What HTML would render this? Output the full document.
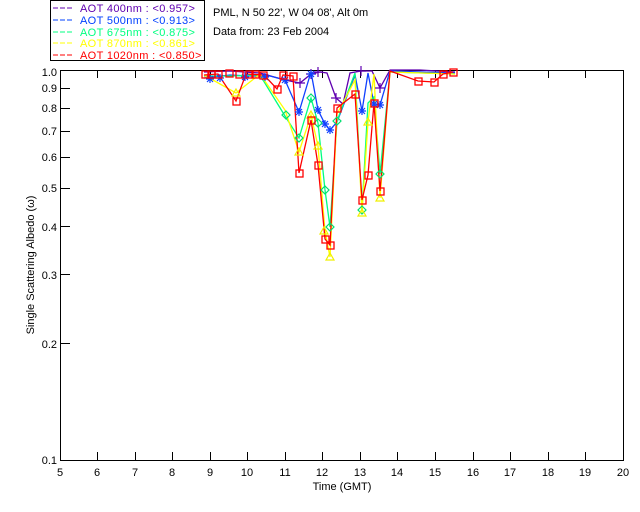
<!DOCTYPE html><html><head><style>body{margin:0;background:#fff}svg{display:block}text{font-family:"Liberation Sans",sans-serif;font-size:11px}</style></head><body>
<svg width="640" height="512" xmlns="http://www.w3.org/2000/svg">
<defs>
<path id="ast" d="M-4 0h8M0-4v8M-3-3l6 6M-3 3l6-6" fill="none"/>
<path id="dia" d="M0-4l4 4-4 4-4-4z" fill="none"/>
<path id="tri" d="M0-4l4 7h-8z" fill="none"/>
<path id="plus" d="M-5 0h10M0-5v10" fill="none"/>
</defs>
<rect x="50.5" y="0.5" width="154" height="60" fill="none" stroke="#000"/>
<g font-size="11" letter-spacing="0.35">
<line x1="53" y1="8" x2="73" y2="8" stroke="#6000b0" stroke-dasharray="5,2"/><text x="80" y="12" fill="#6000b0">AOT  400nm : &lt;0.957&gt;</text>
<line x1="53" y1="20" x2="73" y2="20" stroke="#0040ff" stroke-dasharray="5,2"/><text x="80" y="24" fill="#0040ff">AOT  500nm : &lt;0.913&gt;</text>
<line x1="53" y1="32" x2="73" y2="32" stroke="#00ff80" stroke-dasharray="5,2"/><text x="80" y="36" fill="#00ff80">AOT  675nm : &lt;0.875&gt;</text>
<line x1="53" y1="43" x2="73" y2="43" stroke="#ffff00" stroke-dasharray="5,2"/><text x="80" y="47" fill="#ffff00">AOT  870nm : &lt;0.861&gt;</text>
<line x1="53" y1="55" x2="73" y2="55" stroke="#ff0000" stroke-dasharray="5,2"/><text x="80" y="59" fill="#ff0000">AOT 1020nm : &lt;0.850&gt;</text>
</g>
<text x="213" y="16">PML, N 50 22', W 04 08', Alt 0m</text>
<text x="213" y="35">Data from: 23 Feb 2004</text>
<rect x="60.5" y="70.5" width="563" height="390" fill="none" stroke="#000"/>
<g stroke="#000">
<path d="M97.5 70v8M135.5 70v8M172.5 70v8M210.5 70v8M247.5 70v8M285.5 70v8M322.5 70v8M360.5 70v8M397.5 70v8M435.5 70v8M473.5 70v8M510.5 70v8M548.5 70v8M585.5 70v8M97.5 460v-8M135.5 460v-8M172.5 460v-8M210.5 460v-8M247.5 460v-8M285.5 460v-8M322.5 460v-8M360.5 460v-8M397.5 460v-8M435.5 460v-8M473.5 460v-8M510.5 460v-8M548.5 460v-8M585.5 460v-8"/>
<path d="M60 343.5h10M60 274.5h10M60 226.5h10M60 188.5h10M60 157.5h10M60 131.5h10M60 108.5h10M60 88.5h10"/>
</g>
<g text-anchor="end">
<text x="57" y="464">0.1</text><text x="57" y="348">0.2</text><text x="57" y="279">0.3</text><text x="57" y="231">0.4</text><text x="57" y="192">0.5</text><text x="57" y="161">0.6</text><text x="57" y="135">0.7</text><text x="57" y="112">0.8</text><text x="57" y="92">0.9</text><text x="57" y="76">1.0</text>
</g>
<g text-anchor="middle">
<text x="60" y="476">5</text><text x="97" y="476">6</text><text x="135" y="476">7</text><text x="172" y="476">8</text><text x="210" y="476">9</text><text x="247" y="476">10</text><text x="285" y="476">11</text><text x="322" y="476">12</text><text x="360" y="476">13</text><text x="397" y="476">14</text><text x="435" y="476">15</text><text x="473" y="476">16</text><text x="510" y="476">17</text><text x="548" y="476">18</text><text x="585" y="476">19</text><text x="623" y="476">20</text>
<text x="342" y="490">Time (GMT)</text>
</g>
<text transform="translate(34,265) rotate(-90)" text-anchor="middle" font-size="10">Single Scattering Albedo (ω)</text>
<g fill="none" stroke-width="1.3">
<polyline stroke="#6000b0" points="204,72 230,71 260,73 285,80 300,83 311,74 320,72 327,73 336,98 343,104 350,73 361,71 372,71 380,88 390,70 420,70 455,72"/>
<polyline stroke="#1040ff" points="204,78 230,75 250,76 270,76 285,80 299,112 311,72 318,110 325,124 330,130 337,122 355,75 362,111 368,73 374,104 380,105 390,71 455,73"/>
<polyline stroke="#00ff80" points="204,76 230,76 260,75 285,116 299,138 311,98 318,123 325,190 330,227 337,121 355,73 362,210 368,103 374,97 380,174 390,72 455,74"/>
<polyline stroke="#ffff00" points="204,75 236,93 260,74 285,110 299,152 311,115 318,146 325,231 330,257 337,114 355,80 362,213 368,122 374,74 380,198 390,72 455,74"/>
<polyline stroke="#ff0000" points="204,75 218,74 236,101 246,74 264,75 277,89 283,75 293,76 299,173 311,120 318,165 325,239 330,245 337,108 355,94 362,200 368,175 374,103 380,191 390,71 418,81 434,82 443,74 453,72"/>
</g>
<g stroke="#6000b0" stroke-width="1.2">
<use href="#plus" x="300" y="83"/><use href="#plus" x="311" y="74"/><use href="#plus" x="336" y="98"/><use href="#plus" x="318" y="72"/><use href="#plus" x="380" y="88"/><use href="#plus" x="361" y="71"/>
</g>
<g stroke="#1040ff" stroke-width="1.2">
<use href="#ast" x="210" y="79"/><use href="#ast" x="220" y="78"/><use href="#ast" x="245" y="77"/><use href="#ast" x="265" y="77"/><use href="#ast" x="285" y="80"/><use href="#ast" x="299" y="112"/><use href="#ast" x="311" y="74"/><use href="#ast" x="318" y="110"/><use href="#ast" x="325" y="124"/><use href="#ast" x="330" y="130"/><use href="#ast" x="362" y="111"/><use href="#ast" x="374" y="104"/><use href="#ast" x="380" y="105"/>
</g>
<g stroke="#00e070" stroke-width="1.2">
<use href="#dia" x="286" y="115"/><use href="#dia" x="299" y="138"/><use href="#dia" x="311" y="98"/><use href="#dia" x="318" y="123"/><use href="#dia" x="325" y="190"/><use href="#dia" x="330" y="227"/><use href="#dia" x="337" y="121"/><use href="#dia" x="362" y="210"/><use href="#dia" x="380" y="174"/>
</g>
<g stroke="#f0f000" stroke-width="1.2">
<use href="#tri" x="236" y="93"/><use href="#tri" x="299" y="152"/><use href="#tri" x="311" y="115"/><use href="#tri" x="318" y="146"/><use href="#tri" x="324" y="231"/><use href="#tri" x="330" y="257"/><use href="#tri" x="362" y="213"/><use href="#tri" x="368" y="122"/><use href="#tri" x="380" y="198"/>
</g>
<g fill="none" stroke="#ff0000" stroke-width="1.3">
<rect x="202" y="71" width="7" height="7"/><rect x="208" y="71" width="7" height="7"/><rect x="215" y="71" width="7" height="7"/><rect x="226" y="70" width="7" height="7"/><rect x="236" y="71" width="7" height="7"/><rect x="246" y="71" width="7" height="7"/><rect x="252" y="71" width="7" height="7"/><rect x="260" y="72" width="7" height="7"/><rect x="280" y="72" width="7" height="7"/><rect x="290" y="73" width="7" height="7"/>
<rect x="233" y="98" width="7" height="7"/><rect x="274" y="86" width="7" height="7"/><rect x="296" y="170" width="7" height="7"/><rect x="308" y="117" width="7" height="7"/><rect x="315" y="162" width="7" height="7"/><rect x="322" y="236" width="7" height="7"/><rect x="327" y="242" width="7" height="7"/><rect x="334" y="105" width="7" height="7"/><rect x="352" y="91" width="7" height="7"/><rect x="359" y="197" width="7" height="7"/><rect x="365" y="172" width="7" height="7"/><rect x="371" y="100" width="7" height="7"/><rect x="377" y="188" width="7" height="7"/><rect x="415" y="78" width="7" height="7"/><rect x="431" y="79" width="7" height="7"/><rect x="440" y="71" width="7" height="7"/><rect x="450" y="69" width="7" height="7"/>
</g>
</svg>
</body></html>
